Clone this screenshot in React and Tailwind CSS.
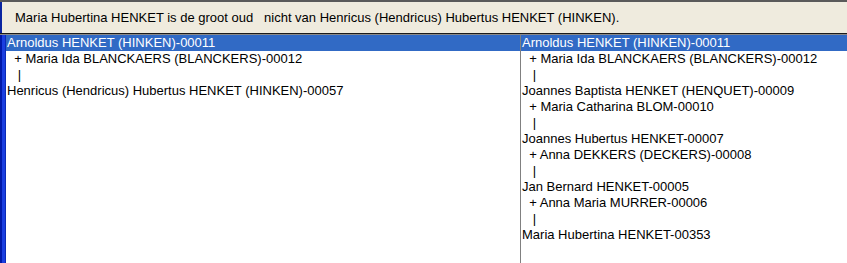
import React from "react";

const left = [
  { t: "Arnoldus HENKET (HINKEN)-00011", sel: true },
  { t: "  + Maria Ida BLANCKAERS (BLANCKERS)-00012" },
  { t: "   |" },
  { t: "Henricus (Hendricus) Hubertus HENKET (HINKEN)-00057" },
];

const right = [
  { t: "Arnoldus HENKET (HINKEN)-00011", sel: true },
  { t: "  + Maria Ida BLANCKAERS (BLANCKERS)-00012" },
  { t: "   |" },
  { t: "Joannes Baptista HENKET (HENQUET)-00009" },
  { t: "  + Maria Catharina BLOM-00010" },
  { t: "   |" },
  { t: "Joannes Hubertus HENKET-00007" },
  { t: "  + Anna DEKKERS (DECKERS)-00008" },
  { t: "   |" },
  { t: "Jan Bernard HENKET-00005" },
  { t: "  + Anna Maria MURRER-00006" },
  { t: "   |" },
  { t: "Maria Hubertina HENKET-00353" },
];

function Rows({ rows }) {
  return (
    <div className="flex flex-col">
      {rows.map((r, i) => (
        <div
          key={i}
          className={
            "h-[16px] leading-[16px] whitespace-pre pl-[1px] " +
            (r.sel ? "bg-[#316ac5] text-white" : "text-black")
          }
        >
          {r.t}
        </div>
      ))}
    </div>
  );
}

export default function App() {
  return (
    <div
      className="w-[847px] h-[263px] overflow-hidden bg-white flex flex-col text-[13px]"
      style={{ fontFamily: '"Liberation Sans", Arial, sans-serif' }}
    >
      <div className="h-[2px] bg-[#5a5a5a]" />
      <div className="flex h-[31px]">
        <div className="w-[2px] bg-[#0a24a0]" />
        <div className="flex-1 bg-[#efebde] flex items-center pl-[13px] whitespace-pre text-black">
          Maria Hubertina HENKET is de groot oud   nicht van Henricus (Hendricus) Hubertus HENKET (HINKEN).
        </div>
      </div>
      <div className="h-[1px] bg-[#1a1a1a]" />
      <div className="h-[1px] bg-[#8a8a8a]" />
      <div className="flex flex-1">
        <div className="w-[6px] flex">
          <div className="w-[2px] bg-[#0018a8]" />
          <div className="w-[3px] bg-[#1a3ee0]" />
          <div className="w-[1px] bg-[#0a2ab8]" />
        </div>
        <div className="w-[514px]">
          <Rows rows={left} />
        </div>
        <div className="w-[1px] bg-[#808080]" />
        <div className="flex-1">
          <Rows rows={right} />
        </div>
      </div>
    </div>
  );
}
